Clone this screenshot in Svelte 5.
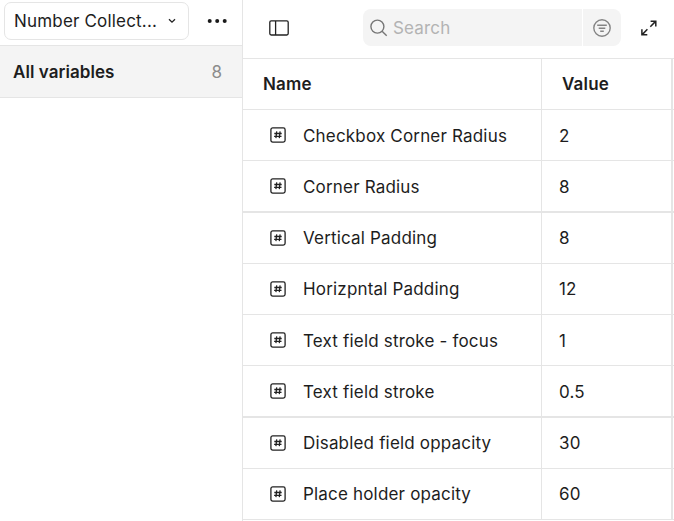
<script>
  const variables = [
    { name: 'Checkbox Corner Radius', value: '2' },
    { name: 'Corner Radius', value: '8', thick: true },
    { name: 'Vertical Padding', value: '8', raised: true },
    { name: 'Horizpntal Padding', value: '12', raised: true },
    { name: 'Text field stroke - focus', value: '1' },
    { name: 'Text field stroke', value: '0.5', thick: true },
    { name: 'Disabled field oppacity', value: '30', raised: true },
    { name: 'Place holder opacity', value: '60', raised: true }
  ];
</script>

<div class="app">
  <aside class="sidebar">
    <div class="collection-bar">
      <button class="picker">
        <span class="picker-label">Number Collect...</span>
        <svg width="8" height="6" viewBox="0 0 8 6" fill="none" stroke="#222" stroke-width="1.3"><path d="M1 1.2 4 4.2 7 1.2" /></svg>
      </button>
      <button class="more" aria-label="More">
        <svg width="20" height="6" viewBox="0 0 20 6" fill="#1a1a1a"><circle cx="2.7" cy="3" r="2" /><circle cx="10.2" cy="3" r="2" /><circle cx="17.7" cy="3" r="2" /></svg>
      </button>
    </div>
    <div class="group"><span>All variables</span><span class="count">8</span></div>
  </aside>

  <main class="content">
    <header class="toolbar">
      <button class="toggle" aria-label="Toggle sidebar">
        <svg width="20" height="16" viewBox="0 0 20 16" fill="none" stroke="#222" stroke-width="1.3"><rect x=".8" y=".8" width="18.4" height="14.2" rx="1.4" /><path d="M6.6 1v14" /></svg>
      </button>
      <div class="search">
        <div class="field">
          <svg width="18" height="18" viewBox="0 0 18 18" fill="none" stroke="#777" stroke-width="1.4"><circle cx="7.4" cy="7.6" r="6.5" /><path d="m12.1 12.2 4.6 4.6" /></svg>
          <span>Search</span>
        </div>
        <button class="filter" aria-label="Filter">
          <svg width="18" height="18" viewBox="0 0 18 18" fill="none" stroke="#858585" stroke-width="1.4"><circle cx="9" cy="9" r="8.2" /><path d="M4.2 6.2h9.6M5.7 9.2h6.6M7.2 12.2h3.6" /></svg>
        </button>
      </div>
      <button class="expand" aria-label="Expand">
        <svg width="16" height="16" viewBox="0 0 16 16" fill="none" stroke="#222" stroke-width="1.5"><path d="M9.6 1.2h5.2v5.2M14.6 1.4 9.3 6.7M.9 9.3v5.5h5.4M1.2 14.6l5.2-5.3" /></svg>
      </button>
    </header>

    <div class="table">
      <div class="row head"><div class="name">Name</div><div class="value">Value</div></div>
      {#each variables as item}
        <div class="row" class:thick={item.thick} class:raised={item.raised}>
          <div class="name">
            <svg width="16" height="16" viewBox="0 0 16 16" fill="none" stroke="#222"><rect x=".9" y=".9" width="14.2" height="14.2" rx="1.8" stroke-width="1.3" /><path d="M6.7 4.4 5.9 11.2M10.1 4.4 9.3 11.2M4.3 6.5h7.4M4.1 9.3h7.4" stroke-width="1.3" /></svg>
            <span>{item.name}</span>
          </div>
          <div class="value">{item.value}</div>
        </div>
      {/each}
    </div>
  </main>
</div>

<style>
  .app { display: flex; width: 674px; height: 521px; overflow: hidden; background: #fff; color: #1d1d1d; font: 17px/24px Inter, sans-serif; letter-spacing: .18px; }
  .app * { box-sizing: border-box; }
  button { display: flex; align-items: center; margin: 0; padding: 0; border: 0; background: none; color: inherit; font: inherit; letter-spacing: inherit; }
  svg { display: block; flex: none; }
  .sidebar { width: 243px; border-right: 1px solid #e5e5e5; }
  .collection-bar { display: flex; height: 46px; padding: 2px 0 0 4px; border-bottom: 1px solid #e5e5e5; }
  .picker { width: 185px; height: 38px; padding: 0 12px 0 9px; justify-content: space-between; border: 1px solid #e5e5e5; border-radius: 7px; }
  .picker-label { white-space: nowrap; }
  .more { height: 37px; margin-left: 18px; }
  .group { display: flex; justify-content: space-between; align-items: center; height: 52px; padding: 0 20px 0 13px; border-bottom: 1px solid #e5e5e5; background: #f4f4f4; font-weight: 600; letter-spacing: .05px; }
  .count { color: #8c8c8c; font-weight: 400; }
  .content { width: 431px; }
  .toolbar { display: flex; align-items: flex-start; height: 59px; padding-top: 9px; border-bottom: 1px solid #e5e5e5; }
  .toggle { height: 37px; margin-left: 26px; }
  .search { display: flex; gap: 1px; width: 258px; height: 37px; margin-left: 74px; border-radius: 8px; overflow: hidden; }
  .field { display: flex; align-items: center; flex: 1; padding-left: 7px; gap: 5px; background: #f4f4f4; color: #b3b3b3; }
  .filter { width: 38px; padding-left: 10px; background: #f4f4f4; }
  .expand { height: 37px; margin-left: 20px; }
  .row { display: flex; height: 51px; border-bottom: 1px solid #e5e5e5; }
  .row.thick { height: 52px; border-bottom-width: 2px; }
  .name { display: flex; align-items: center; width: 299px; padding: 1px 0 0 27px; border-right: 1px solid #e5e5e5; white-space: nowrap; }
  .name span { margin-left: 17px; padding-top: 1px; }
  .raised .name span { padding: 0 0 1px; }
  .name svg { margin-top: -2px; }
  .value { display: flex; align-items: center; width: 131px; padding: 2px 0 0 17px; border-right: 2px solid #e5e5e5; }
  .raised .value { padding-top: 0; }
  .head { font-weight: 600; }
  .head .name { padding: 0 0 0 20px; }
  .head .value { padding: 0 0 0 20px; }
</style>
